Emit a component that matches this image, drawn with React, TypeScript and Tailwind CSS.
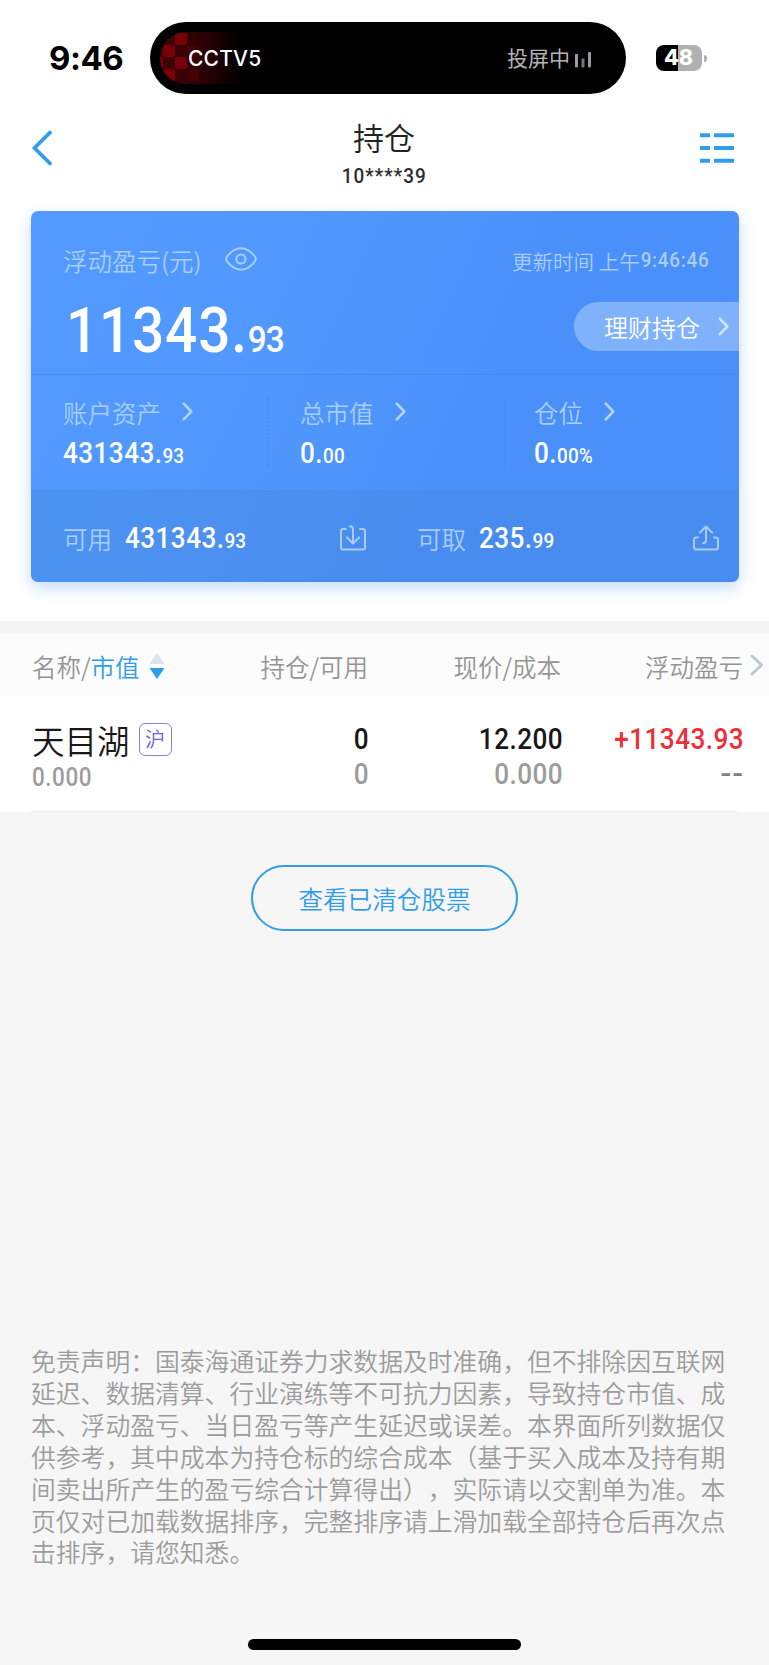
import React from 'react';

const CJK = "font-['Noto_Sans_CJK_SC',sans-serif] font-[350]";
const NUM = "font-['Roboto',sans-serif] font-medium";

function Chevron({ className }: { className: string }) {
  return (
    <svg className={className} viewBox="0 0 11 20" fill="none" stroke="currentColor" strokeWidth="2.7" strokeLinecap="round" strokeLinejoin="round">
      <path d="M1.5 1.8 L9.5 10 L1.5 18.2" />
    </svg>
  );
}

function Amount({ whole, frac }: { whole: string; frac: string }) {
  return (
    <div className={`${NUM} origin-left scale-x-90 whitespace-nowrap text-[29px] leading-[30px] tracking-[0.5px] text-white`}>
      {whole}
      <span className="text-[21px] tracking-[0.2px]">{frac}</span>
    </div>
  );
}

function StatusBar() {
  return (
    <div className="flex h-[94px] items-start pt-[22px]">
      <div className="flex h-[72px] w-[150px] items-center pl-[49px] font-['Inter',sans-serif] text-[33px] font-bold leading-none tracking-[-0.5px] text-black">9:46</div>
      <div className="flex h-[72px] w-[476px] items-center rounded-full bg-black p-[10px]">
        <div className="relative flex h-[52px] w-[130px] items-center overflow-hidden rounded-l-full bg-linear-to-r from-[#460005] via-[#240003] via-40% to-black to-75% pl-[28px]">
          <svg className="absolute left-0 top-0 h-[52px] w-[60px]" viewBox="0 0 60 52">
            <g fill="#780008">
              <rect x="15" y="1" width="12" height="12" rx="2.5" />
              <rect x="3" y="13" width="12" height="12" rx="2.5" />
              <rect x="15" y="25" width="12" height="12" rx="2.5" />
              <rect x="-9" y="25" width="12" height="12" rx="2.5" />
              <rect x="3" y="37" width="12" height="12" rx="2.5" />
            </g>
            <g fill="#450005">
              <rect x="27" y="13" width="12" height="12" rx="2.5" />
              <rect x="27" y="37" width="12" height="12" rx="2.5" />
            </g>
            <rect x="39" y="25" width="8" height="12" rx="2.5" fill="#2a0004" />
          </svg>
          <span className="relative font-['Inter',sans-serif] text-[21px] font-medium leading-none tracking-[0.2px] text-white">CCTV5</span>
        </div>
        <div className="ml-auto flex items-center pr-[25px]">
          <span className="-mt-[2px] font-['Noto_Sans_CJK_SC',sans-serif] text-[21px] font-normal leading-[52px] text-[#b4b4b4]">投屏中</span>
          <svg className="ml-[5px] mt-[3px] h-[16px] w-[16px]" viewBox="0 0 16 16">
            <rect x="0" y="2" width="3" height="13.5" rx="1" fill="#9a9aa3" />
            <rect x="6.5" y="6.5" width="3" height="9" rx="1" fill="#74747c" />
            <rect x="13" y="0" width="3" height="15.5" rx="1" fill="#9a9aa3" />
          </svg>
        </div>
      </div>
      <div className="flex h-[72px] items-center pl-[30px]">
        <div className="flex h-[26px] w-[46px] items-center justify-center rounded-[8px] bg-linear-to-r from-black from-48% to-[#b1b1b1] to-48% pr-[1px] font-['Inter',sans-serif] text-[21.5px] font-extrabold leading-none text-white">48</div>
        <div className="ml-[2px] h-[7px] w-[3px] rounded-r-full bg-[#b1b1b1]" />
      </div>
    </div>
  );
}

function Header() {
  return (
    <div className="flex h-[117px] items-start justify-between">
      <svg className="ml-[31px] mt-[36px] h-[36px] w-[22px]" viewBox="0 0 22 36" fill="none" stroke="#2f9deb" strokeWidth="3.8" strokeLinecap="round" strokeLinejoin="miter">
        <path d="M19 2.5 L3.5 18 L19 33.5" />
      </svg>
      <div className="ml-[15px] flex flex-col items-center">
        <div className={`${CJK} mt-[26px] text-[31px] leading-[34px] text-[#222]`}>持仓</div>
        <div className={`${NUM} mt-[10px] scale-x-90 text-[21px] leading-[24px] tracking-[1.2px] text-[#2c2c2c]`}>10****39</div>
      </div>
      <svg className="mr-[35px] mt-[38px] h-[32px] w-[34px]" viewBox="0 0 34 32" fill="#2f9deb">
        <rect x="0" y="1.3" width="10" height="4" rx="0.6" />
        <rect x="14" y="1.3" width="20" height="4" rx="0.6" />
        <rect x="0" y="14" width="10" height="4" rx="0.6" />
        <rect x="14" y="14" width="20" height="4" rx="0.6" />
        <rect x="0" y="26.7" width="10" height="4" rx="0.6" />
        <rect x="14" y="26.7" width="20" height="4" rx="0.6" />
      </svg>
    </div>
  );
}

function Stat({ label, whole, frac, className }: { label: string; whole: string; frac: string; className: string }) {
  return (
    <div className={className}>
      <div className="flex h-[30px] items-center">
        <span className={`${CJK} text-[24.5px] leading-[30px] text-[#a9cdfd]`}>{label}</span>
        <Chevron className="-mt-[3px] ml-[21px] h-[19px] w-[11px] text-[#b5d3fd]" />
      </div>
      <div className="mt-[10px]">
        <Amount whole={whole} frac={frac} />
      </div>
    </div>
  );
}

function Dots() {
  return (
    <svg className="mt-[23px] h-[70px] w-[2px] shrink-0" viewBox="0 0 2 70">
      <path d="M1 0 V70" stroke="#3f87ea" strokeWidth="1.2" strokeDasharray="1.5 2.4" />
    </svg>
  );
}

function Card() {
  return (
    <div className="ml-[31px] mr-[30px] h-[371px] overflow-hidden rounded-[7px] bg-linear-[115deg,#529aff_0%,#5098fd_38%,#4a90fa_62%,#4a90fa_100%] shadow-[0_6px_16px_rgba(74,144,250,0.32)]">
      <div className="h-[164px] border-b border-[#4389ee]">
        <div className="flex h-[66px] items-center pl-[32px] pr-[30px] pt-[33px]">
          <span className={`${CJK} text-[24.5px] leading-[30px] text-[#a9cdfd]`}>浮动盈亏(元)</span>
          <svg className="ml-[23px] -mt-[3px] h-[24px] w-[32px]" viewBox="0 0 32 24" fill="none" stroke="#a9cdfd" strokeWidth="2">
            <path d="M1.2 12 C1.2 9.5 8 1.3 16 1.3 S30.8 9.5 30.8 12 S24 22.7 16 22.7 S1.2 14.5 1.2 12 Z" />
            <circle cx="16" cy="12" r="4.6" />
          </svg>
          <span className={`${CJK} ml-auto text-[20.5px] leading-[30px] text-[#a9cdfd]`}>
            更新时间 上午
          </span>
          <span className={`${NUM} -ml-[7px] -mt-px origin-right scale-x-90 text-[21px] leading-[30px] tracking-[0.8px] text-[#a9cdfd]`}>9:46:46</span>
        </div>
        <div className="flex items-start justify-between">
          <div className={`${NUM} ml-[35px] mt-[19px] origin-left scale-x-90 text-[63px] leading-[70px] tracking-[0.9px] text-white`}>
            11343.<span className="text-[37px] tracking-[-1px]">93</span>
          </div>
          <div className="mt-[25px] flex h-[49px] w-[165px] items-center rounded-l-full bg-[#80b1fb] pl-[30px]">
            <span className={`${CJK} text-[24px] leading-[49px] text-white`}>理财持仓</span>
            <Chevron className="ml-[18px] h-[19px] w-[11px] text-[#d0e2ff]" />
          </div>
        </div>
      </div>
      <div className="flex h-[115px]">
        <Stat className="w-[236px] shrink-0 pl-[32px] pt-[23px]" label="账户资产" whole="431343." frac="93" />
        <Dots />
        <Stat className="w-[235px] shrink-0 pl-[31px] pt-[23px]" label="总市值" whole="0." frac="00" />
        <Dots />
        <Stat className="pl-[28px] pt-[23px]" label="仓位" whole="0." frac="00%" />
      </div>
      <div className="flex h-[92px] items-center bg-[#4686de]/40 pl-[32px] pr-[20px] pt-[5px]">
        <span className={`${CJK} w-[62px] text-[24.5px] leading-[30px] text-[#a9cdfd]`}>可用</span>
        <div className="mt-[2px] w-[215px]"><Amount whole="431343." frac="93" /></div>
        <svg className="-mt-[2px] h-[26px] w-[26px]" viewBox="0 0 26 26" fill="none" stroke="#a9cbf8" strokeWidth="2" strokeLinecap="round" strokeLinejoin="round">
          <path d="M6 4 H3 Q1 4 1 6 V22.5 Q1 24.5 3 24.5 H23 Q25 24.5 25 22.5 V6 Q25 4 23 4 H20" />
          <path d="M10 1.3 Q13 1.3 13 4.5 V18 M7 12.5 L13 18.5 L19 12.5" />
        </svg>
        <span className={`${CJK} ml-[51px] w-[62px] text-[24.5px] leading-[30px] text-[#a9cdfd]`}>可取</span>
        <div className="mt-[2px]"><Amount whole="235." frac="99" /></div>
        <svg className="-mt-[2px] ml-auto h-[26px] w-[26px]" viewBox="0 0 26 26" fill="none" stroke="#a9cbf8" strokeWidth="2" strokeLinecap="round" strokeLinejoin="round">
          <path d="M5 12.5 H3 Q1 12.5 1 14.5 V22.5 Q1 24.5 3 24.5 H23 Q25 24.5 25 22.5 V14.5 Q25 12.5 23 12.5 H21" />
          <path d="M10 18.3 Q13 18.3 13 15 V2 M7 7.5 L13 1.5 L19 7.5" />
        </svg>
      </div>
    </div>
  );
}

function Holdings() {
  const head = `${CJK} text-right text-[24.5px] leading-[30px]`;
  const main = `${NUM} origin-right scale-x-90 text-right text-[29px] leading-[35px] tracking-[0.5px]`;
  return (
    <div className="border-t-[13px] border-[#f5f5f5] bg-white">
      <div className="flex h-[63px] items-center bg-[#fcfcfc] pt-[2px] text-[#949494]">
        <div className="flex w-[200px] items-center pl-[32px]">
          <span className={`${CJK} text-[24.5px] leading-[30px]`}>名称/<span className="text-[#2f9deb]">市值</span></span>
          <svg className="-mt-[2px] ml-[9px] h-[26px] w-[16px]" viewBox="0 0 16 26">
            <path d="M8 0 L15.5 11 H0.5 Z" fill="#dbe3ea" />
            <path d="M8 26 L15.5 15 H0.5 Z" fill="#2f9deb" />
          </svg>
        </div>
        <div className={`${head} w-[168px]`}>持仓/可用</div>
        <div className={`${head} w-[193px]`}>现价/成本</div>
        <div className={`${head} w-[182px]`}>浮动盈亏</div>
        <svg className="-mt-[3px] ml-[7px] h-[22px] w-[14px]" viewBox="0 0 14 22" fill="none" stroke="#b9c9d8" strokeWidth="3" strokeLinecap="round" strokeLinejoin="round">
          <path d="M2 2 L11.5 11 L2 20" />
        </svg>
      </div>
      <div className="flex h-[115px] pt-[25px]">
        <div className="w-[201px] pl-[32px]">
          <div className="flex h-[36px] items-center">
            <span className={`${CJK} -mt-px text-[32.5px] leading-[36px] text-[#181818]`}>天目湖</span>
            <span className={`${CJK} ml-[9px] -mt-[2px] flex h-[33px] w-[33px] items-center justify-center rounded-[6px] border border-[#8583ea] text-[20px] leading-none text-[#6664e0]`}>沪</span>
          </div>
          <div className={`${NUM} mt-[5px] origin-left scale-x-90 text-[25px] leading-[30px] tracking-[0.6px] text-[#9c9c9c]`}>0.000</div>
        </div>
        <div className="w-[168px]">
          <div className={`${main} text-[#181818]`}>0</div>
          <div className={`${main} text-[#9c9c9c]`}>0</div>
        </div>
        <div className="w-[194px]">
          <div className={`${main} text-[#181818]`}>12.200</div>
          <div className={`${main} text-[#9c9c9c]`}>0.000</div>
        </div>
        <div className="w-[181px]">
          <div className={`${main} text-[#ee2e38]`}>+11343.93</div>
          <div className={`${NUM} origin-right scale-x-110 text-right text-[29px] leading-[35px] tracking-[0.8px] text-[#808080]`}>--</div>
        </div>
      </div>
      <div className="ml-[31px] mr-[32px] -mt-px h-px bg-[#e8e8e8]" />
    </div>
  );
}

const notice = [
  '免责声明：国泰海通证券力求数据及时准确，但不排除因互联网',
  '延迟、数据清算、行业演练等不可抗力因素，导致持仓市值、成',
  '本、浮动盈亏、当日盈亏等产生延迟或误差。本界面所列数据仅',
  '供参考，其中成本为持仓标的综合成本（基于买入成本及持有期',
  '间卖出所产生的盈亏综合计算得出），实际请以交割单为准。本',
  '页仅对已加载数据排序，完整排序请上滑加载全部持仓后再次点',
  '击排序，请您知悉。',
];

export default function App() {
  return (
    <div className="flex h-[1665px] w-[769px] flex-col overflow-hidden bg-[#f6f6f6]">
      <div className="h-[621px] shrink-0 bg-white">
        <StatusBar />
        <Header />
        <Card />
      </div>
      <Holdings />
      <button className={`${CJK} mx-auto mt-[53px] h-[66px] w-[267px] shrink-0 rounded-[33px] border-2 border-[#2f9deb] text-[24.6px] leading-[60px] text-[#2f9deb]`}>
        查看已清仓股票
      </button>
      <div className={`${CJK} mt-[414px] pl-[31px] text-[24.8px] leading-[31.9px] text-[#9c9c9c] [text-spacing-trim:space-all]`}>
        {notice.map((line) => (
          <div key={line} className="whitespace-nowrap">{line}</div>
        ))}
      </div>
      <div className="mx-auto mb-[15px] mt-auto h-[11px] w-[273px] shrink-0 rounded-full bg-black" />
    </div>
  );
}
